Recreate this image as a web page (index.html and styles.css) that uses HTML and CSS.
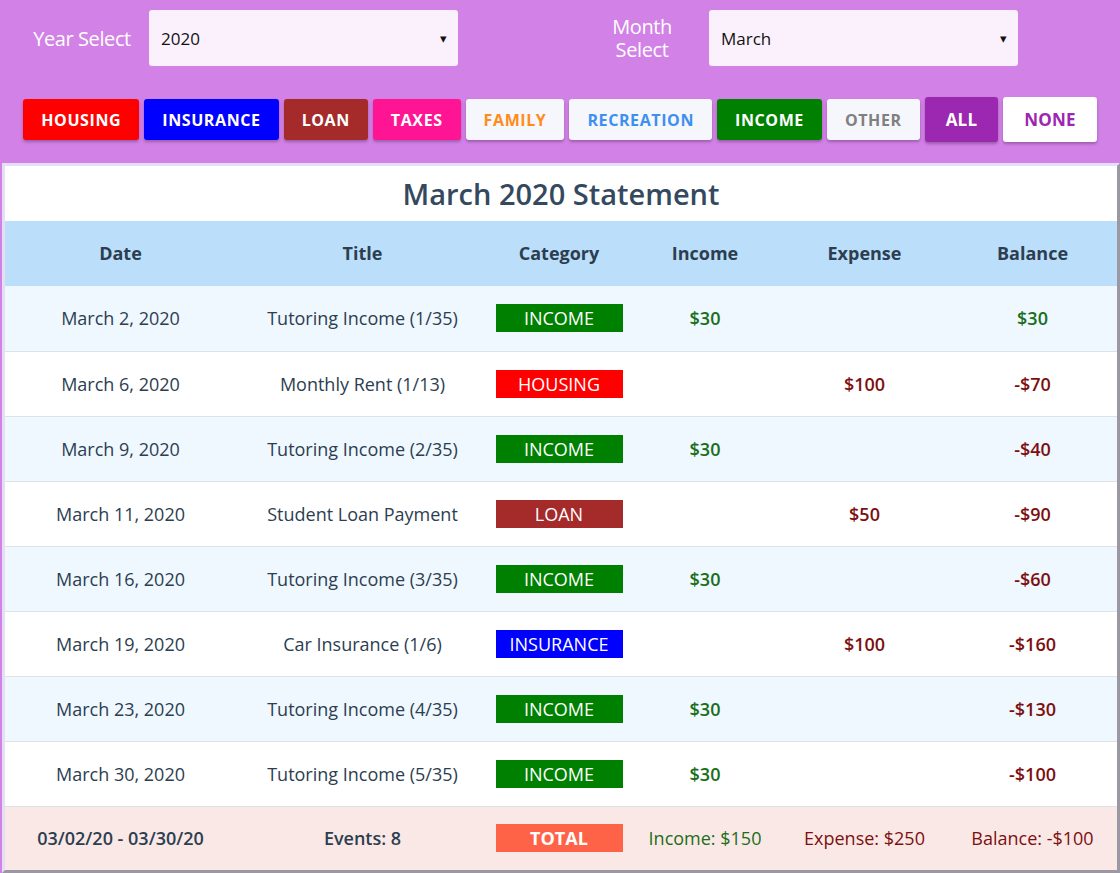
FILE: index.html
```html
<!DOCTYPE html>
<html lang="en">
<head>
<meta charset="utf-8">
<title>March 2020 Statement</title>
<link rel="stylesheet" href="styles.css">
</head>
<body>
<header class="top">
  <div class="selectors">
    <div class="sel-group">
      <label class="sel-label" for="year">Year Select</label>
      <div class="sel-wrap">
        <select id="year" class="sel"><option>2020</option></select>
        <span class="sel-arrow">▾</span>
      </div>
    </div>
    <div class="sel-group">
      <label class="sel-label" for="month">Month Select</label>
      <div class="sel-wrap">
        <select id="month" class="sel"><option>March</option></select>
        <span class="sel-arrow">▾</span>
      </div>
    </div>
  </div>
  <nav class="filters">
    <button class="fbtn on c-housing">Housing</button>
    <button class="fbtn on c-insurance">Insurance</button>
    <button class="fbtn on c-loan">Loan</button>
    <button class="fbtn on c-taxes">Taxes</button>
    <button class="fbtn off t-family">Family</button>
    <button class="fbtn off t-recreation">Recreation</button>
    <button class="fbtn on c-income">Income</button>
    <button class="fbtn off t-other">Other</button>
    <button class="fbtn big all">All</button>
    <button class="fbtn big none">None</button>
  </nav>
</header>

<main class="card">
  <h1 class="title">March 2020 Statement</h1>
  <table class="stmt">
    <colgroup>
      <col class="w-date"><col class="w-title"><col class="w-cat"><col class="w-inc"><col class="w-exp"><col class="w-bal">
    </colgroup>
    <thead>
      <tr><th>Date</th><th>Title</th><th>Category</th><th>Income</th><th>Expense</th><th>Balance</th></tr>
    </thead>
    <tbody>
      <tr><td>March 2, 2020</td><td>Tutoring Income (1/35)</td><td><span class="badge c-income">INCOME</span></td><td class="pos">$30</td><td></td><td class="pos">$30</td></tr>
      <tr><td>March 6, 2020</td><td>Monthly Rent (1/13)</td><td><span class="badge c-housing">HOUSING</span></td><td></td><td class="neg">$100</td><td class="neg">-$70</td></tr>
      <tr><td>March 9, 2020</td><td>Tutoring Income (2/35)</td><td><span class="badge c-income">INCOME</span></td><td class="pos">$30</td><td></td><td class="neg">-$40</td></tr>
      <tr><td>March 11, 2020</td><td>Student Loan Payment</td><td><span class="badge c-loan">LOAN</span></td><td></td><td class="neg">$50</td><td class="neg">-$90</td></tr>
      <tr><td>March 16, 2020</td><td>Tutoring Income (3/35)</td><td><span class="badge c-income">INCOME</span></td><td class="pos">$30</td><td></td><td class="neg">-$60</td></tr>
      <tr><td>March 19, 2020</td><td>Car Insurance (1/6)</td><td><span class="badge c-insurance">INSURANCE</span></td><td></td><td class="neg">$100</td><td class="neg">-$160</td></tr>
      <tr><td>March 23, 2020</td><td>Tutoring Income (4/35)</td><td><span class="badge c-income">INCOME</span></td><td class="pos">$30</td><td></td><td class="neg">-$130</td></tr>
      <tr><td>March 30, 2020</td><td>Tutoring Income (5/35)</td><td><span class="badge c-income">INCOME</span></td><td class="pos">$30</td><td></td><td class="neg">-$100</td></tr>
    </tbody>
    <tfoot>
      <tr><td class="strong">03/02/20 - 03/30/20</td><td class="strong">Events: 8</td><td><span class="badge total">TOTAL</span></td><td class="sum-pos">Income: $150</td><td class="sum-neg">Expense: $250</td><td class="sum-neg">Balance: -$100</td></tr>
    </tfoot>
  </table>
</main>
</body>
</html>
```

FILE: styles.css
```css
* { box-sizing: border-box; }

html, body {
  margin: 0;
  padding: 0;
}

body {
  background: #d282e6;
  font-family: "Open Sans", "Noto Sans", "Liberation Sans", sans-serif;
  color: #2c3e50;
  height: 873px;
  overflow: hidden;
}

/* ---------- header ---------- */
.top {
  padding: 10px 0 21px;
}

.selectors {
  display: grid;
  grid-template-columns: 560px 560px;
}

.sel-group {
  display: flex;
  align-items: center;
  gap: 16px;
  padding-left: 31px;
}

.sel-label {
  width: 102px;
  flex: none;
  color: #fff;
  font-size: 20px;
  line-height: 23px;
  letter-spacing: -0.4px;
  text-align: center;
}

.sel-wrap {
  position: relative;
  width: 309px;
  height: 56px;
}

.sel {
  appearance: none;
  -webkit-appearance: none;
  width: 100%;
  height: 100%;
  border: none;
  border-radius: 3px;
  background: #faf1fd;
  padding: 0 12px;
  font-family: inherit;
  font-size: 17px;
  color: #111;
  outline: none;
}

.sel-arrow {
  position: absolute;
  right: 11px;
  top: 50%;
  transform: translateY(-52%);
  font-size: 13px;
  color: #111;
  pointer-events: none;
}

.filters {
  margin-top: 31px;
  display: flex;
  justify-content: center;
  align-items: center;
  gap: 5px;
  height: 45px;
}

.fbtn {
  border: none;
  border-radius: 3px;
  height: 41px;
  padding: 0 18px;
  font-family: inherit;
  font-size: 16px;
  font-weight: 700;
  letter-spacing: 0.6px;
  text-transform: uppercase;
  box-shadow: 0 2px 3px rgba(60, 20, 70, 0.35);
  cursor: pointer;
}

.fbtn.on { color: #fff; }
.fbtn.off { background: #f6f7fc; }

.c-housing { background: #ff0000; }
.c-insurance { background: #0000ff; }
.c-loan { background: #a52a2a; }
.c-taxes { background: #ff1493; }
.c-income { background: #008000; }

.t-family { color: #ff8c1a; }
.t-recreation { color: #3d8ff0; }
.t-other { color: #808080; }

.fbtn.big {
  height: 45px;
  padding: 0 21px;
  font-size: 17px;
  letter-spacing: 0.2px;
}

.all { background: #9c27b0; color: #fff; }
.none { background: #fff; color: #9c27b0; }

/* ---------- card ---------- */
.card {
  margin-left: 2px;
  background: #fff;
  border-top: 3px solid #e5def7;
  border-left: 3px solid #e5def7;
  border-right: 3px solid #9b98a3;
  border-bottom: 3px solid #9b98a3;
}

.title {
  margin: 0;
  height: 55px;
  display: flex;
  align-items: center;
  justify-content: center;
  font-size: 29px;
  font-weight: 600;
  color: #34495e;
}

.stmt {
  width: 100%;
  border-collapse: collapse;
  table-layout: fixed;
  font-size: 18px;
}

.w-date { width: 231px; }
.w-title { width: 253px; }
.w-cat { width: 140px; }
.w-inc { width: 152px; }
.w-exp { width: 167px; }
.w-bal { width: 169px; }

.stmt th,
.stmt td {
  text-align: center;
  padding: 0;
  vertical-align: middle;
}

.stmt th {
  height: 65px;
  background: #bbdefb;
  font-weight: 700;
  color: #2c3e50;
  padding-bottom: 2px;
}

.stmt td {
  height: 65px;
  border-bottom: 1px solid #dde2e6;
  color: #2c3e50;
}

.stmt tbody tr:nth-child(odd) td { background: #eff7ff; }
.stmt tbody tr:nth-child(even) td { background: #fff; }

.stmt tfoot td {
  height: 64px;
  border-bottom: none;
  background: #fae8e6;
}

.badge {
  display: block;
  width: 127px;
  height: 28px;
  line-height: 28px;
  margin: 0 auto;
  color: #fff;
  font-size: 18px;
}

.badge.total {
  background: #ff6347;
  font-weight: 700;
}

.pos { color: #1a6e1a !important; font-weight: 600; }
.neg { color: #7d0f0f !important; font-weight: 600; }

.strong { font-weight: 600; }
.sum-pos { color: #1a6e1a !important; font-weight: 500; }
.sum-neg { color: #7d0f0f !important; font-weight: 500; }
```
